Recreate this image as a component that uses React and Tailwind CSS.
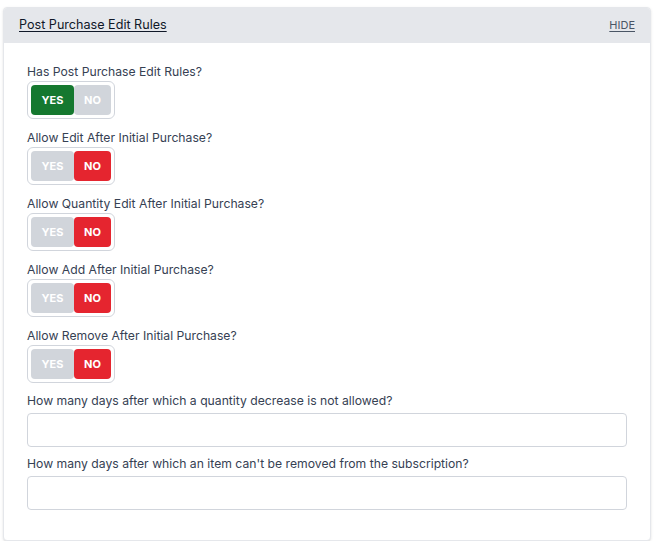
import React, { useState } from 'react';

const TOGGLES = [
    { key: 'hasRules', label: 'Has Post Purchase Edit Rules?', value: true },
    { key: 'allowEdit', label: 'Allow Edit After Initial Purchase?', value: false },
    { key: 'allowQty', label: 'Allow Quantity Edit After Initial Purchase?', value: false },
    { key: 'allowAdd', label: 'Allow Add After Initial Purchase?', value: false },
    { key: 'allowRemove', label: 'Allow Remove After Initial Purchase?', value: false },
];

const YesNoToggle = ({ value, onChange }) => (
    <div className="inline-flex p-[3px] border border-gray-300 rounded-md bg-white">
        <button
            type="button"
            onClick={() => onChange(true)}
            className={`w-[43px] h-[30px] text-[11px] font-bold text-white rounded ${value ? 'bg-[#15782f]' : 'bg-[#d1d5db] text-gray-100'}`}
        >
            YES
        </button>
        <button
            type="button"
            onClick={() => onChange(false)}
            className={`w-[37px] h-[30px] text-[11px] font-bold text-white rounded ${value ? 'bg-[#d1d5db]' : 'bg-[#e5252f]'}`}
        >
            NO
        </button>
    </div>
);

const App = () => {
    const [values, setValues] = useState(
        Object.fromEntries(TOGGLES.map(t => [t.key, t.value]))
    );

    const setValue = (key, value) => setValues({ ...values, [key]: value });

    return (
        <div className="pt-[7px] pl-[3px] w-[651px] font-['Inter',sans-serif]">
            <div className="border border-gray-200 rounded shadow-sm bg-white overflow-hidden">
                <div className="h-[35px] bg-[#e5e7eb] flex items-center justify-between px-[15px]">
                    <span className="text-[12.6px] text-gray-900 underline underline-offset-2">Post Purchase Edit Rules</span>
                    <span className="text-[11px] text-gray-600 underline underline-offset-2">HIDE</span>
                </div>

                <div className="px-[23px] pt-[20px] pb-[30px]">
                    {TOGGLES.map(t => (
                        <div key={t.key} className="mb-[10px]">
                            <label className="block text-[12.2px] leading-[18px] text-gray-700">{t.label}</label>
                            <YesNoToggle value={values[t.key]} onChange={v => setValue(t.key, v)} />
                        </div>
                    ))}

                    <label className="block text-[12.2px] leading-[18px] text-gray-700 -mt-[1px] mb-[3px]">
                        How many days after which a quantity decrease is not allowed?
                    </label>
                    <input type="text" className="block w-full h-[34px] border border-gray-300 rounded px-2 text-sm" />

                    <label className="block text-[12.2px] leading-[18px] text-gray-700 mt-[8px] mb-[3px]">
                        How many days after which an item can't be removed from the subscription?
                    </label>
                    <input type="text" className="block w-full h-[34px] border border-gray-300 rounded px-2 text-sm" />
                </div>
            </div>
        </div>
    );
};

export default App;
